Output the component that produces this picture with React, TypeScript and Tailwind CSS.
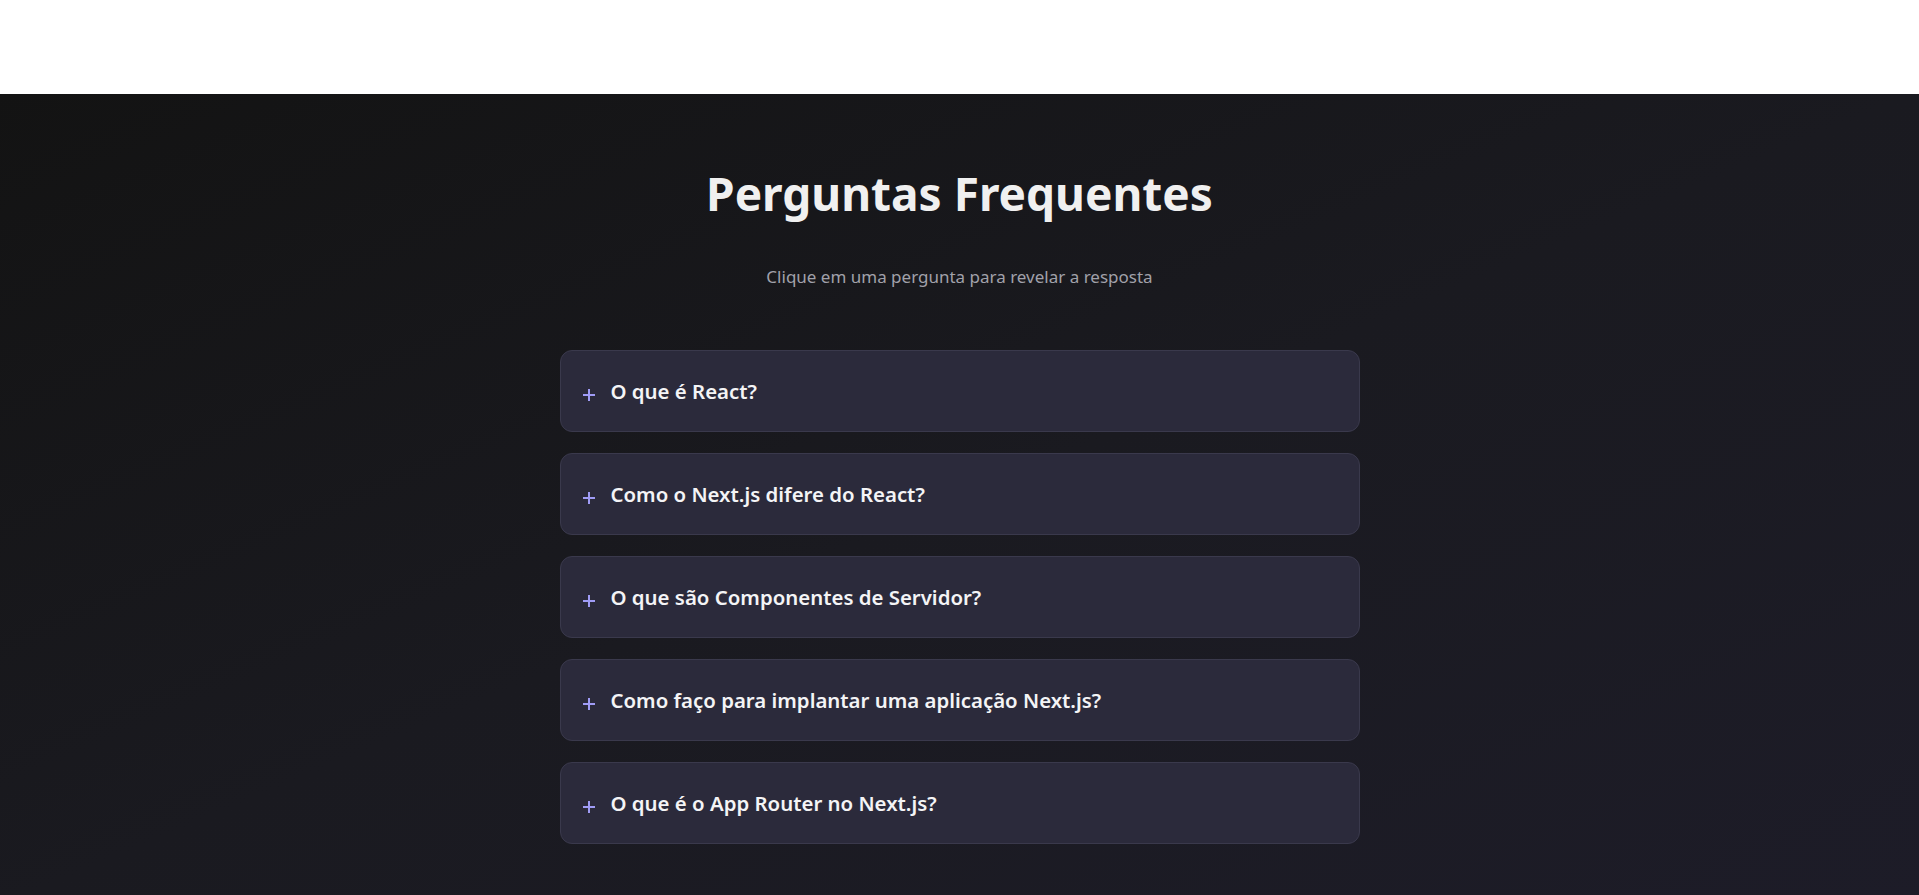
import { useState } from "react"

const faqs = [
  {
    question: "O que é React?",
    answer:
      "React é uma biblioteca JavaScript para construir interfaces de usuário baseadas em componentes.",
  },
  {
    question: "Como o Next.js difere do React?",
    answer:
      "Next.js é um framework construído sobre o React que adiciona roteamento, renderização no servidor e otimizações.",
  },
  {
    question: "O que são Componentes de Servidor?",
    answer:
      "São componentes renderizados no servidor, que enviam menos JavaScript para o navegador.",
  },
  {
    question: "Como faço para implantar uma aplicação Next.js?",
    answer:
      "Você pode implantar na Vercel, em um servidor Node.js próprio ou exportar como site estático.",
  },
  {
    question: "O que é o App Router no Next.js?",
    answer:
      "É o sistema de roteamento baseado na pasta app, com layouts aninhados e Componentes de Servidor.",
  },
]

const PlusIcon = ({ open }: { open: boolean }) => (
  <svg
    width="12"
    height="12"
    viewBox="0 0 12 12"
    className="mt-[7px] shrink-0 text-[#a09cf6]"
    fill="none"
    stroke="currentColor"
    strokeWidth="2"
  >
    <path d="M0 6h12" />
    {!open && <path d="M6 0v12" />}
  </svg>
)

const FaqItem = ({
  question,
  answer,
}: {
  question: string
  answer: string
}) => {
  const [open, setOpen] = useState(false)

  return (
    <div className="rounded-xl border border-[#3a394c] bg-[#2b2a3b]">
      <button
        onClick={() => setOpen(!open)}
        className="flex w-full items-center gap-4 pl-[22px] pr-6 py-[26px] text-left"
      >
        <PlusIcon open={open} />
        <span className="text-[20.4px] font-semibold leading-7 text-[#f4f4f6]">
          {question}
        </span>
      </button>
      {open && (
        <p className="px-6 pb-6 pl-[50px] text-base text-[#a1a1aa]">{answer}</p>
      )}
    </div>
  )
}

export default function App() {
  return (
    <div className="font-['Noto_Sans','Open_Sans',sans-serif]">
      <div className="h-[94px] bg-white" />
      <section className="min-h-[801px] bg-gradient-to-br from-[#131313] via-[#1a1a20] to-[#1d1c28] px-4 pt-[76px] pb-16">
        <h1 className="text-center text-[46px] leading-none font-bold text-[#f0f0f0]">
          Perguntas Frequentes
        </h1>
        <p className="mt-[47px] text-center text-[17px] leading-7 text-[#a1a1aa]">
          Clique em uma pergunta para revelar a resposta
        </p>
        <div className="mx-auto mt-[59px] flex w-[800px] flex-col gap-[21px]">
          {faqs.map((faq) => (
            <FaqItem key={faq.question} {...faq} />
          ))}
        </div>
      </section>
    </div>
  )
}
